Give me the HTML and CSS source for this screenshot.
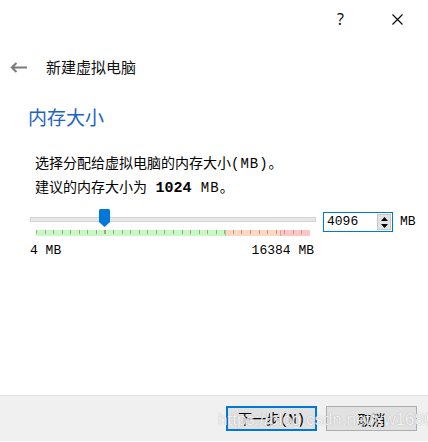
FILE: index.html
```html
<!DOCTYPE html>
<html>
<head>
<meta charset="utf-8">
<link rel="stylesheet" href="styles.css">
</head>
<body>
<div class="page">
  <div class="titlebar">
    <span class="help">?</span>
    <svg class="close" width="11" height="11" viewBox="0 0 11 11"><path d="M0.5 0.5L10.5 10.5M10.5 0.5L0.5 10.5" stroke="#000" stroke-width="1.1" fill="none"/></svg>
  </div>
  <div class="nav">
    <svg class="back" width="17" height="11" viewBox="0 0 17 11"><path d="M1.5 5.5H17M6.5 1L1.8 5.5L6.5 10" stroke="#7a7a7a" stroke-width="2" fill="none"/></svg>
    <span class="nav-title">新建虚拟电脑</span>
  </div>
  <h1 class="heading">内存大小</h1>
  <div class="desc">
    <p>选择分配给虚拟电脑的内存大小<span class="mono wide">(MB)</span>。</p>
    <p>建议的内存大小为<span class="mono"> </span><b class="mono">1024</b><span class="mono wide"> MB</span>。</p>
  </div>
  <div class="memrow">
    <div class="slider">
      <div class="track-wrap">
        <div class="track"></div>
        <svg class="thumb" width="11" height="18" viewBox="0 0 11 18"><path d="M0 1.5Q0 0 1.5 0H9.5Q11 0 11 1.5V13L5.5 18L0 13Z" fill="#0078d7"/></svg>
      </div>
      <div class="ticks"></div>
      <div class="labels"><span>4 MB</span><span>16384 MB</span></div>
    </div>
    <div class="spin">
      <span class="spin-val">4096</span>
      <div class="spin-btns">
        <span class="spin-btn"><svg width="7" height="4" viewBox="0 0 7 4"><path d="M3.5 0L7 4H0Z" fill="#000"/></svg></span>
        <span class="spin-btn"><svg width="7" height="4" viewBox="0 0 7 4"><path d="M0 0H7L3.5 4Z" fill="#000"/></svg></span>
      </div>
    </div>
    <span class="unit">MB</span>
  </div>
  <div class="footer">
    <button class="btn primary">下一步<span class="mono">(N)</span></button>
    <button class="btn">取消</button>
    <span class="watermark">https://blog.csdn.net/xw1680</span>
  </div>
</div>
</body>
</html>
```

FILE: styles.css
```css
* { box-sizing: border-box; }
html, body { margin: 0; padding: 0; background: #fff; }
body {
  width: 428px;
  height: 442px;
  overflow: hidden;
  font-family: "Noto Sans CJK SC", "Noto Sans", sans-serif;
  color: #000;
}
.page {
  display: flex;
  flex-direction: column;
  height: 442px;
  padding-bottom: 1px;
}
.titlebar {
  height: 38px;
  display: flex;
  align-items: center;
  justify-content: flex-end;
  padding-right: 25px;
}
.help {
  font-family: "Noto Sans", sans-serif;
  font-size: 16px;
  line-height: 20px;
  margin-right: 48px;
  color: #111;
}
.close { display: block; }
.nav {
  margin-top: 18px;
  height: 22px;
  display: flex;
  align-items: center;
  padding-left: 10px;
}
.back { display: block; margin-right: 19px; }
.nav-title {
  font-size: 15px;
  line-height: 22px;
  color: #111;
}
.heading {
  margin: 25px 0 0 0;
  padding-left: 28px;
  font-size: 19px;
  line-height: 28px;
  font-weight: normal;
  color: #1e63c4;
}
.desc {
  margin-top: 19px;
  padding-left: 35px;
  font-size: 14px;
}
.desc p { margin: 0; line-height: 24px; height: 24px; }
.mono { font-family: "Liberation Mono", "Noto Sans CJK SC", monospace; }
.wide { letter-spacing: 1px; }
.desc b { font-weight: bold; font-size: 15px; }
.memrow {
  margin-top: 11px;
  display: flex;
  align-items: flex-start;
}
.slider {
  margin-left: 30px;
  width: 286px;
  display: flex;
  flex-direction: column;
}
.track-wrap {
  position: relative;
  height: 19px;
  padding-top: 8px;
}
.track {
  height: 5px;
  background: #e7e7e7;
  border: 1px solid #d3d3d3;
}
.thumb {
  position: absolute;
  left: 69px;
  top: 0;
  display: block;
}
.ticks {
  margin-top: 2px;
  margin-left: 6px;
  width: 274px;
  height: 6px;
  background-image:
    repeating-linear-gradient(to right, #a79e90 0 1px, transparent 1px 8.5625px),
    linear-gradient(to right, #c6f9c4 0 189px, #9ecf9a 189px 190px, #ffd6bf 190px 244px, #f09a9a 244px 245px, #ffc5c5 245px);
  background-size: 100% 4px, 100% 6px;
  background-repeat: no-repeat;
}
.labels {
  margin-top: 7px;
  display: flex;
  justify-content: space-between;
  font-family: "Liberation Mono", monospace;
  font-size: 13px;
  line-height: 16px;
  padding-right: 2px;
}
.spin {
  margin-top: 3px;
  margin-left: 7px;
  width: 70px;
  height: 20px;
  border: 1px solid #0078d7;
  display: flex;
  align-items: center;
  justify-content: space-between;
  padding-left: 3px;
  padding-right: 1px;
}
.spin-val {
  font-family: "Liberation Mono", monospace;
  font-size: 13px;
  line-height: 16px;
}
.spin-btns {
  width: 14px;
  height: 16px;
  display: flex;
  flex-direction: column;
  background: #e3e3e3;
  border: 1px solid #c8c8c8;
}
.spin-btn {
  flex: 1;
  display: flex;
  align-items: center;
  justify-content: center;
}
.spin-btn svg { display: block; }
.unit {
  margin-left: 7px;
  margin-top: 5px;
  font-family: "Liberation Mono", monospace;
  font-size: 13px;
  line-height: 16px;
}
.footer {
  position: relative;
  margin-top: auto;
  height: 46px;
  background: #f0f0f0;
  border-top: 1px solid #dfdfdf;
  display: flex;
  justify-content: flex-end;
  align-items: flex-start;
  padding-top: 10px;
  padding-right: 11px;
  gap: 9px;
}
.btn {
  width: 91px;
  height: 25px;
  margin: 0;
  padding: 0;
  background: #e1e1e1;
  border: 1px solid #adadad;
  font-family: "Noto Sans CJK SC", sans-serif;
  font-size: 14px;
  line-height: 20px;
  color: #000;
}
.btn.primary { border: 2px solid #0078d7; }
.watermark {
  position: absolute;
  left: 218px;
  top: 14px;
  font-family: "Liberation Sans", sans-serif;
  font-size: 17px;
  line-height: 20px;
  color: rgba(255,255,255,0.85);
  text-shadow: 0 0 1px rgba(90,90,90,0.5);
  pointer-events: none;
  white-space: nowrap;
}
```
